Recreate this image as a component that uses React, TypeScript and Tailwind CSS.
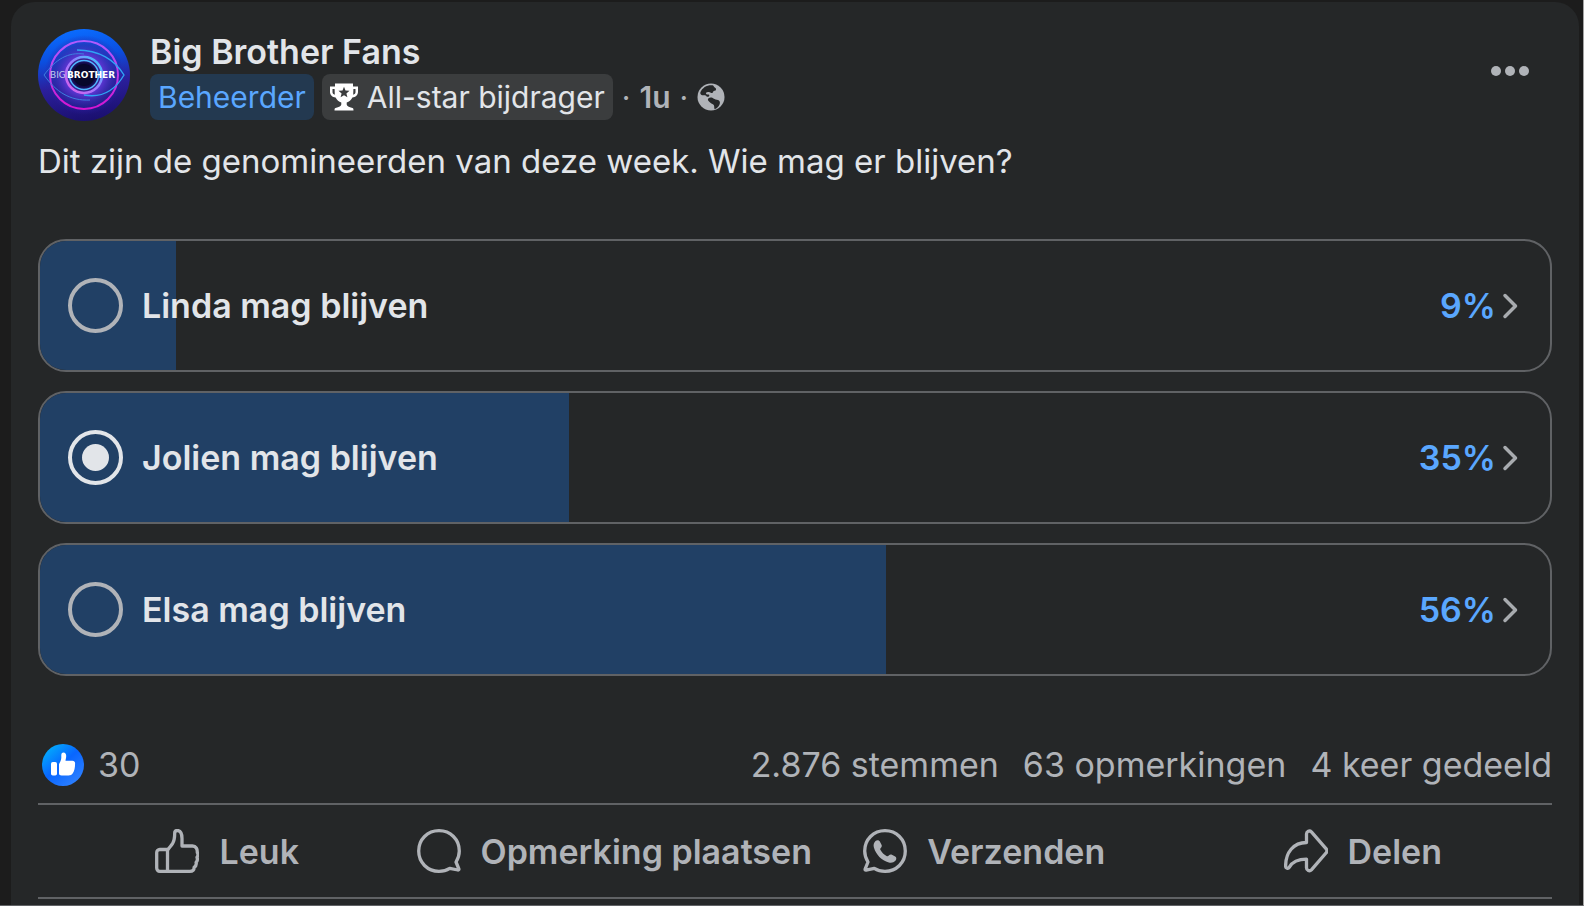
import { useState } from "react"

const options = [
    { id: "linda", name: "Linda mag blijven", percent: 9 },
    { id: "jolien", name: "Jolien mag blijven", percent: 35 },
    { id: "elsa", name: "Elsa mag blijven", percent: 56 },
]

const Avatar = () => (
    <svg className="w-[92px] h-[92px] shrink-0" viewBox="0 0 92 92" role="img" aria-label="Big Brother">
        <defs>
            <linearGradient id="sky" x1="0.4" y1="0" x2="0.55" y2="1">
                <stop offset="0" stopColor="#0a6cff" />
                <stop offset="0.3" stopColor="#0b4fe0" />
                <stop offset="0.6" stopColor="#2b1f9c" />
                <stop offset="1" stopColor="#1a0f6e" />
            </linearGradient>
            <radialGradient id="glow" cx="0.5" cy="0.5" r="0.5">
                <stop offset="0" stopColor="#05051f" />
                <stop offset="0.3" stopColor="#120a4a" />
                <stop offset="0.48" stopColor="#5a35d0" />
                <stop offset="0.75" stopColor="#2f2aa8" stopOpacity="0.6" />
                <stop offset="1" stopColor="#2a1aa0" stopOpacity="0" />
            </radialGradient>
            <linearGradient id="ring" x1="0" y1="0" x2="0" y2="1">
                <stop offset="0" stopColor="#b05cff" />
                <stop offset="1" stopColor="#d414d0" />
            </linearGradient>
            <linearGradient id="iris" x1="0" y1="1" x2="1" y2="0">
                <stop offset="0" stopColor="#e35be8" />
                <stop offset="0.5" stopColor="#9a7bff" />
                <stop offset="1" stopColor="#2fd0ff" />
            </linearGradient>
        </defs>
        <circle cx="46" cy="46" r="46" fill="url(#sky)" />
        <circle cx="46" cy="46" r="40" fill="url(#glow)" />
        <circle cx="46" cy="46" r="34" fill="none" stroke="url(#ring)" strokeWidth="2" />
        <path d="M6 46C18 30 30 23 46 25M6 46c12 17 26 26 46 25" fill="none" stroke="#3d7fe0" strokeWidth="1" />
        <path d="M39 21c22 0 38 10 47 25C76 63 62 69 46 66" fill="none" stroke="#2fa4f5" strokeWidth="1.400" />
        <circle cx="46" cy="46" r="18" fill="none" stroke="url(#iris)" strokeWidth="2.500" />
        <circle cx="46" cy="46" r="14.500" fill="none" stroke="#4fb8ff" strokeWidth="1.500" />
        <circle cx="46" cy="46" r="11" fill="#07072b" />
        <g fontFamily="'DejaVu Sans', sans-serif" fontSize="9">
            <text x="12" y="49" fill="#c4c8ee">BIG</text>
            <text x="29" y="49" fill="#ffffff" fontWeight="700">BROTHER</text>
        </g>
    </svg>
)

const TrophyIcon = () => (
    <svg className="w-7 h-7" viewBox="0 0 28 28" fill="#ffffff" aria-hidden="true">
        <path
            fillRule="evenodd"
            d="M5 0.5h18v3h5v5.5c0 3-2.4 5.3-5.6 5.5-1.3 2.6-3.3 4.4-5.7 5.1v1.8c0 1.4 2.2 2.7 5.8 3.6.8.2 1 .7 1 2.5H4.500c0-1.800.2-2.300 1-2.500 3.600-.9 5.800-2.200 5.800-3.600v-1.800c-2.400-.7-4.400-2.500-5.700-5.100C2.400 14.300 0 12 0 9V3.500h5zM2.500 6v3c0 1.300.8 2.300 2.300 2.700L4.600 6zM23.400 6l-.2 5.700c1.500-.4 2.300-1.400 2.300-2.700V6zM14 3.800l-1.500 3.700-4 .3 3.100 2.600-1 3.900L14 12.200l3.400 2.100-1-3.900 3.100-2.600-4-.3z"
        />
    </svg>
)

const GlobeIcon = () => (
    <svg className="w-7 h-7" viewBox="0 0 28 28" aria-label="Openbaar" role="img">
        <circle cx="14" cy="14" r="13.500" fill="#b0b3b8" />
        <path
            d="M15.500 2.300C10 1.800 5.500 4.500 3.400 9.300c-.4 1.400.3 2.500 1.700 2.900 1.300.3 2.200-.3 3.500.2.800.4.900 1.300 1.900 1.300 1.100 0 1.900-.5 1.800-1.500-.1-.8-1.100-.8-2-.8-1.200 0-1.700-.8-1.200-1.600.7-1 2.300-.9 3.600-.6 1 .3 1.500 1 2.400.8.900-.2.900-1.300 1.600-2 .7-.6 1.800-.3 2.200-1.100.5-1-.2-1.700-1.100-2.300-.8-.6-1.300-2.100-2.300-2.300z"
            fill="#252728"
        />
        <path
            d="M11.300 15.500c1-1 2.700-1.200 4-.7 1.300.4 1.700 1.400 3.200 1.600 1.700.2 3.500.4 4.200 2 .7 1.700-.3 3.800-1.500 5.300-1 1.200-2.200 2-3.500 2.500-.8-1.300-.2-2.700-.8-4-.6-1.200-2.200-1.500-3.500-2.500-1.400-1-3.300-2.800-2.100-4.200z"
            fill="#252728"
        />
    </svg>
)

const LikeBadge = () => (
    <svg className="w-[42px] h-[42px]" viewBox="0 0 42 42" aria-hidden="true">
        <defs>
            <linearGradient id="like" x1="0.1" y1="0.1" x2="0.8" y2="0.9">
                <stop offset="0" stopColor="#02adfc" />
                <stop offset="0.5" stopColor="#0866ff" />
                <stop offset="1" stopColor="#2b7eff" />
            </linearGradient>
        </defs>
        <circle cx="21" cy="21" r="21" fill="url(#like)" />
        <rect x="9" y="18" width="6" height="13.500" rx="1.800" fill="#ffffff" />
        <path
            d="M17 20.500c0-1.200 2.300-3.500 2.300-6.500V11c0-1.700 1-2.500 2.200-2.500 1.700 0 2.700 1.400 2.700 3.200 0 2-.5 3.500-.7 5h7c1.500 0 2.600 1 2.600 2.300 0 5-.8 8.200-2.300 10.300-1 1.500-2.300 2.200-4.300 2.200h-7c-1.600 0-2.500-.8-2.500-2.200z"
            fill="#ffffff"
        />
    </svg>
)

const LikeIcon = () => (
    <svg className="w-11 h-11 shrink-0" viewBox="0 0 44 44" fill="none" stroke="currentColor" strokeWidth="3.300" strokeLinejoin="round" aria-hidden="true">
        <path d="M12.500 20.500H4.800c-1.800 0-3.100 1.500-3.100 3.300v15.200c0 1.800 1.300 3.300 3.100 3.300h30c3 0 4.500-1.500 4.300-4 1.800-1.200 2.500-3 2-5 1.300-1.400 1.600-3.300.9-5 1.200-1.500 1.300-3.200.3-4.700.2-3.500-1.300-6.600-4.800-6.600h-10.500V9.500c0-5.500-2-8-4.800-8-1.700 0-2.500 1-2.500 2.700 0 4-.3 7.300-2.200 10.500-1.500 2.400-3 3.500-4.500 5.800zM12.500 20.500v22" />
    </svg>
)

const CommentIcon = () => (
    <svg className="w-11 h-11 shrink-0" viewBox="0 0 44 44" fill="none" stroke="currentColor" strokeWidth="3.300" strokeLinejoin="round" aria-hidden="true">
        <path d="M39 33c2-3.200 3.300-6.900 3.300-11C42.300 10.500 33.500 1.700 22 1.700S1.700 10.500 1.700 22 10.500 42.300 22 42.300c4 0 7.600-1 10.700-3l8.300 1.700c.7.100 1.100-.4.900-1z" />
    </svg>
)

const WhatsAppIcon = () => (
    <svg className="w-11 h-11 shrink-0" viewBox="0 0 44 44" fill="none" stroke="currentColor" strokeWidth="3.300" strokeLinejoin="round" aria-hidden="true">
        <path d="M5 33c-2-3.200-3.300-6.900-3.300-11C1.700 10.500 10.500 1.700 22 1.700S42.300 10.500 42.300 22 33.500 42.300 22 42.300c-4 0-7.600-1-10.700-3L3 41.200c-.7.100-1.100-.4-.9-1z" />
        <path
            stroke="none"
            fill="currentColor"
            d="M12.500 12c1.200-1.200 3.300-1.200 4.200.3l1.800 3.400c.6 1.200.3 2.100-.5 3-.8.800-1 1.500-.5 2.400 1.400 2.500 3.400 4.500 6 6 .9.500 1.600.3 2.300-.5.900-1 1.900-1.400 3.100-.8l3.300 1.800c1.500.9 1.400 3 .2 4.200-1.700 1.800-4.200 2.300-6.600 1.600-7.300-2-12.800-7.500-14.900-14.800-.7-2.400-.2-4.900 1.600-6.600z"
        />
    </svg>
)

const ShareIcon = () => (
    <svg className="w-11 h-11 shrink-0" viewBox="0 0 44 44" fill="none" stroke="currentColor" strokeWidth="3.300" strokeLinejoin="round" aria-hidden="true">
        <path d="M22.500 13.500V5c0-2.700 3-4 4.900-2.100l14.800 17c1 1.200 1 2.700 0 3.900l-14.800 17c-1.900 1.900-4.900.6-4.900-2.100v-8.500c-8 0-13.700 2-17.300 8.100-1 1.700-3.600 1-3.600-1.100 0-13.500 7.700-23.700 20.900-23.700z" />
    </svg>
)

const actions = [
    { label: "Leuk", Icon: LikeIcon },
    { label: "Opmerking plaatsen", Icon: CommentIcon },
    { label: "Verzenden", Icon: WhatsAppIcon },
    { label: "Delen", Icon: ShareIcon },
]

const App = () => {
    const [selected, setSelected] = useState("jolien")

    return (
        <div className="flex min-h-screen flex-col border-r border-b border-r-[#a3a3a3] border-b-[#606265] bg-[#1c1c1c] pt-[2px] pl-[11px] pr-1 font-['Inter',sans-serif] text-[#e2e5e9]">
            <article className="flex-1 rounded-t-3xl bg-[#252728] px-[27px] pt-[27px]">
                {/* Header */}
                <header className="flex items-start">
                    <Avatar />
                    <div className="ml-5 flex-1">
                        <h1 className="text-[34px] leading-[45px] font-semibold">
                            <a href="#profile">Big Brother Fans</a>
                        </h1>
                        <div className="flex items-center text-[30px] leading-[46px]">
                            <span className="rounded-lg bg-[#233950] px-2 text-[#5aa7ff]">Beheerder</span>
                            <span className="ml-2 flex items-center gap-[9px] rounded-lg bg-[#3b3d3e] px-2">
                                <TrophyIcon />
                                All-star bijdrager
                            </span>
                            <span className="ml-[9px] flex items-center gap-[9px] text-[#b0b3b8]">
                                <span>·</span>
                                <span className="font-semibold">1u</span>
                                <span>·</span>
                                <GlobeIcon />
                            </span>
                        </div>
                    </div>
                    <button aria-label="Meer opties" className="mt-[37px] mr-[23px] flex gap-1">
                        <span className="h-2.5 w-2.5 rounded-full bg-[#b0b3b8]" />
                        <span className="h-2.5 w-2.5 rounded-full bg-[#b0b3b8]" />
                        <span className="h-2.5 w-2.5 rounded-full bg-[#b0b3b8]" />
                    </button>
                </header>

                <p className="mt-[18px] text-[33px] leading-[44px]">Dit zijn de genomineerden van deze week. Wie mag er blijven?</p>

                {/* Poll */}
                <div role="radiogroup" className="mt-14 flex flex-col gap-[19px]">
                    {options.map((option) => (
                        <div
                            key={option.id}
                            className="relative flex h-[133px] items-center overflow-hidden rounded-[28px] border-2 border-[#606265] pl-7 pr-8"
                        >
                            <div className="absolute inset-y-0 left-0 bg-[#214065]" style={{ width: `${option.percent}%` }} />
                            <input
                                type="radio"
                                id={option.id}
                                name="poll"
                                checked={selected === option.id}
                                onChange={() => setSelected(option.id)}
                                className="relative h-[55px] w-[55px] shrink-0 appearance-none rounded-full border-4 border-[#b0b3b8] bg-clip-content p-2.5 checked:border-[#e2e5e9] checked:bg-[#e2e5e9]"
                            />
                            <label htmlFor={option.id} className="relative ml-[19px] flex-1 text-[34px] leading-[44px] font-semibold">
                                {option.name}
                            </label>
                            <button className="relative flex items-center gap-1.5 text-[34px] leading-[44px] font-semibold text-[#5aa7ff]">
                                {option.percent}%
                                <svg className="h-7 w-4" viewBox="0 0 16 28" fill="none" stroke="#a8abaf" strokeWidth="3.500" strokeLinecap="round" strokeLinejoin="round" aria-hidden="true">
                                    <path d="M3 3.500l10.500 10.500L3 24.500" />
                                </svg>
                            </button>
                        </div>
                    ))}
                </div>

                {/* Reactions */}
                <div className="mt-[65px] flex items-center justify-between pb-3.5 pl-1 text-[34px] leading-[48px] text-[#b0b3b8]">
                    <button className="flex items-center gap-3.5">
                        <LikeBadge />
                        30
                    </button>
                    <div className="flex gap-6">
                        <a href="#votes">2.876 stemmen</a>
                        <a href="#comments">63 opmerkingen</a>
                        <a href="#shares">4 keer gedeeld</a>
                    </div>
                </div>

                {/* Actions */}
                <div className="grid grid-cols-4 border-y-2 border-[#606265] text-[#b0b3b8]">
                    {actions.map(({ label, Icon }) => (
                        <button
                            key={label}
                            className="flex h-[92px] items-center gap-5 whitespace-nowrap text-[34px] font-semibold [justify-content:safe_center]"
                        >
                            <Icon />
                            {label}
                        </button>
                    ))}
                </div>
            </article>
        </div>
    )
}

export default App
